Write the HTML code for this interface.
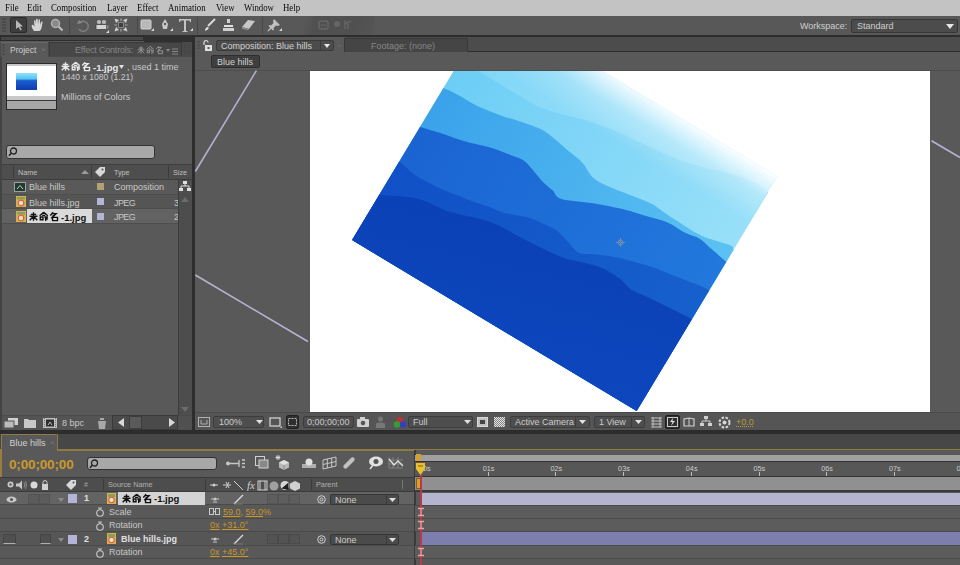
<!DOCTYPE html>
<html><head><meta charset="utf-8"><style>
*{margin:0;padding:0;box-sizing:border-box}
html,body{-webkit-font-smoothing:antialiased;width:960px;height:565px;overflow:hidden;background:#2b2b2b;font-family:"Liberation Sans",sans-serif;font-size:9px;color:#c8c8c8}
.a{position:absolute}
.t{position:absolute;white-space:nowrap;line-height:1}
.menu .t{font-family:"Liberation Serif",serif;font-size:10px;color:#0a0a0a;top:2.6px;transform:scaleX(0.88);transform-origin:0 0}
svg{position:absolute;overflow:visible}
.dd{position:absolute;background:#4b4b4b;border:1px solid #383838;border-radius:2px}
.or{color:#d39b22}
</style></head><body>
<div class="a menu" style="left:0;top:0;width:960px;height:15.5px;background:#c3c3c3">
<span class="t" style="left:5px">File</span>
<span class="t" style="left:27px">Edit</span>
<span class="t" style="left:51px">Composition</span>
<span class="t" style="left:107px">Layer</span>
<span class="t" style="left:137px">Effect</span>
<span class="t" style="left:168px">Animation</span>
<span class="t" style="left:216px">View</span>
<span class="t" style="left:244px">Window</span>
<span class="t" style="left:283px">Help</span>
</div>
<div class="a" style="left:0px;top:15.5px;width:960px;height:19.5px;background:#585858;"></div>
<div class="a" style="left:300px;top:15.5px;width:75px;height:19.5px;background:linear-gradient(110deg,#585858 0,#585858 6px,#505050 18px,#505050 55px,#565656 75px);"></div>
<div class="a" style="left:0px;top:35px;width:960px;height:6px;background:#2d2d2d;"></div>
<div class="a" style="left:1px;top:37px;width:142px;height:3px;background:#474747;"></div>
<svg style="left:2px;top:18px" width="4" height="14" viewBox="0 0 4 14"><path d="M0 1H4M0 4H4M0 7H4M0 10H4M0 13H4" stroke="#3e3e3e" stroke-width="1"/></svg>
<div class="a" style="left:10px;top:17px;width:17px;height:16px;background:#3d3d3d;border:1px solid #2c2c2c;border-radius:2px"></div>
<svg style="left:14px;top:19px" width="9" height="12" viewBox="0 0 9 12"><path d="M2 1L2 10L4.5 8L6.5 11.5L7.8 10.8L6 7.5L9 7.5Z" fill="#b8b8b8"/></svg>
<svg style="left:31px;top:18px" width="13" height="14" viewBox="0 0 13 14"><path d="M3 13C1 10 0 8 1 7C2 6 3 8 3.5 8.5L3 3C3 2 4.5 2 4.6 3L5 6.5L5 1.5C5 0.5 6.6 0.5 6.7 1.5L7 6.5L7.5 2C7.6 1 9 1 9 2L9 7L10 4C10.5 3 11.8 3.4 11.5 4.5L10.5 10C10 12 9 13 8 13Z" fill="#d4d4d4"/></svg>
<svg style="left:50px;top:18px" width="14" height="14" viewBox="0 0 14 14"><circle cx="5.5" cy="5.5" r="4" fill="#8a8a8a" stroke="#b0b0b0" stroke-width="1.5"/><path d="M8.5 8.5L12.5 12.5" stroke="#b8b8b8" stroke-width="2.2"/></svg>
<div class="a" style="left:69px;top:17px;width:1px;height:17px;background:#474747;"></div>
<svg style="left:76px;top:18px" width="14" height="14" viewBox="0 0 14 14"><path d="M4 4.5A5 5 0 1 1 3 11" fill="none" stroke="#7c7c7c" stroke-width="1.6"/><path d="M1 6L3 2L6.5 5Z" fill="#8a8a8a"/></svg>
<svg style="left:95px;top:18px" width="15" height="15" viewBox="0 0 15 15"><circle cx="4" cy="4" r="2.6" fill="#b8b8b8" stroke="#3a3a3a" stroke-width="0.6"/><circle cx="9" cy="4" r="2.6" fill="#b8b8b8" stroke="#3a3a3a" stroke-width="0.6"/><rect x="1" y="6.5" width="10.5" height="5" rx="1" fill="#d4d4d4" stroke="#333" stroke-width="0.7"/><rect x="11.5" y="7.5" width="2" height="3" fill="#8a8a8a"/><path d="M11 15L14 15L14 12Z" fill="#d8d8d8"/></svg>
<svg style="left:114px;top:18px" width="14" height="14" viewBox="0 0 14 14"><rect x="4.5" y="4.5" width="5" height="5" fill="#3e3e3e" stroke="#9a9a9a" stroke-width="0.8"/><path d="M0.5 0.5L5 2L2 5Z M13.5 0.5L9 2L12 5Z M0.5 13.5L5 12L2 9Z M13.5 13.5L9 12L12 9Z" fill="#d0d0d0"/><path d="M7 0.5V3M7 11V13.5M0.5 7H3M11 7H13.5" stroke="#a8a8a8" stroke-width="1.2"/></svg>
<div class="a" style="left:137px;top:17px;width:1px;height:17px;background:#474747;"></div>
<svg style="left:140px;top:18px" width="14" height="14" viewBox="0 0 14 14"><rect x="1" y="2" width="10" height="9" rx="1" fill="#b8b8b8" stroke="#d0d0d0" stroke-width="1"/><path d="M11 13L14 13L14 10Z" fill="#d8d8d8"/></svg>
<svg style="left:160px;top:18px" width="13" height="14" viewBox="0 0 13 14"><path d="M5 1L8 6L7 11L3 11L2 6Z" fill="#c8c8c8"/><circle cx="5" cy="6" r="1.2" fill="#555"/><path d="M10 13L13 13L13 10Z" fill="#d8d8d8"/></svg>
<svg style="left:178px;top:17px" width="15" height="16" viewBox="0 0 15 16"><path d="M1 2H13V5H12L11.5 3.5H8V14H9.5V15H4.5V14H6V3.5H2.5L2 5H1Z" fill="#c4c4c4"/><path d="M12 14L15 14L15 11Z" fill="#d8d8d8"/></svg>
<div class="a" style="left:197px;top:17px;width:1px;height:17px;background:#474747;"></div>
<svg style="left:203px;top:18px" width="13" height="14" viewBox="0 0 13 14"><path d="M12 1L5 8" stroke="#d8d8d8" stroke-width="2"/><path d="M2 13C2 11 3 9 5 9C6 10 6 11 4 12Z" fill="#e0e0e0"/></svg>
<svg style="left:222px;top:18px" width="13" height="14" viewBox="0 0 13 14"><rect x="5" y="1" width="3" height="4" fill="#d0d0d0"/><path d="M2 7H11V9H2Z" fill="#e0e0e0"/><rect x="1" y="10" width="11" height="3" fill="#d0d0d0"/></svg>
<svg style="left:241px;top:18px" width="15" height="13" viewBox="0 0 15 13"><path d="M1 9L7 2L14 3L8 11Z" fill="#c8c8c8"/><path d="M1 9L8 11L7 12L1 11Z" fill="#8a8a8a"/></svg>
<div class="a" style="left:262px;top:17px;width:1px;height:17px;background:#474747;"></div>
<svg style="left:267px;top:18px" width="15" height="14" viewBox="0 0 15 14"><path d="M7 1L13 7L11 8L9 7.5L6.5 10L7 11.5L6 12.5L1.5 8L2.5 7L4 7.5L6.5 5L6 3Z" fill="#c0c0c0"/><path d="M4 10L1 13" stroke="#c0c0c0" stroke-width="1.2"/><path d="M12 13L15 13L15 10Z" fill="#d8d8d8"/></svg>
<svg style="left:318px;top:19px" width="12" height="11" viewBox="0 0 12 11"><rect x="1" y="2" width="9" height="8" rx="2" fill="none" stroke="#676767" stroke-width="1.4"/><path d="M3 6H8" stroke="#676767"/></svg>
<svg style="left:332px;top:19px" width="10" height="11" viewBox="0 0 10 11"><circle cx="5" cy="5" r="3" fill="#666"/></svg>
<svg style="left:343px;top:19px" width="10" height="11" viewBox="0 0 10 11"><path d="M2 1V10M2 5L8 2M5 5V10" stroke="#666" stroke-width="1.4"/></svg>
<span class="t" style="left:800px;top:22px;color:#cfcfcf;font-size:9px;">Workspace:</span>
<div class="a" style="left:851px;top:19px;width:107px;height:14px;background:#4c4c4c;border:1px solid #363636;border-radius:2px"></div>
<span class="t" style="left:857px;top:22px;color:#cfcfcf;font-size:9px;">Standard</span>
<svg style="left:946px;top:24px" width="8" height="5" viewBox="0 0 8 5"><path d="M0 0H8L4 5Z" fill="#e8e8e8"/></svg>
<div class="a" style="left:0px;top:41px;width:192px;height:389px;background:#595959;"></div>
<div class="a" style="left:144px;top:35px;width:48px;height:7px;background:#303030;"></div>
<div class="a" style="left:0px;top:42px;width:192px;height:15px;background:#4a4a4a;"></div>
<div class="a" style="left:49px;top:42px;width:133px;height:14px;background:#474747;border:1px solid #3a3a3a;border-bottom:none"></div>
<div class="a" style="left:1px;top:42px;width:47px;height:15px;background:#595959;border-top:1px solid #666"></div>
<svg style="left:2px;top:44px" width="3" height="11" viewBox="0 0 3 11"><path d="M0 1H3M0 4H3M0 7H3M0 10H3" stroke="#444"/></svg>
<span class="t" style="left:10px;top:46px;color:#cccccc;font-size:8.5px;">Project</span>
<span class="t" style="left:41px;top:46px;color:#777;font-size:8px;">×</span>
<span class="t" style="left:75px;top:46px;color:#858585;font-size:9px;letter-spacing:-0.2px">Effect Controls: </span>
<svg style="left:137px;top:46px" width="29" height="9" viewBox="0 0 29 9"><path transform="translate(0.00,0) scale(0.800)" d="M2 2.6H8M0.6 4.8H9.4M5 0.3V9.8M5 4.8L0.8 9.2M5 4.8L9.2 9.2" fill="none" stroke="#9a9a9a" stroke-width="1.12"/><path transform="translate(9.20,0) scale(0.800)" d="M5 0.3L0.5 4.2M5 0.3L9.5 4.2M3.2 3.8H6.8M1.2 5.6H4.2V8.6H1.2ZM5.6 5.5H8.8V8.5M7.2 5.5V9.9" fill="none" stroke="#9a9a9a" stroke-width="1.12"/><path transform="translate(18.40,0) scale(0.800)" d="M4.2 0.3L1 3.8M3 1.8H7.5L2 7M3.5 3.8L5.5 5M3.5 6H9V9.6H3.5Z" fill="none" stroke="#9a9a9a" stroke-width="1.12"/></svg>
<svg style="left:166px;top:48px" width="14" height="7" viewBox="0 0 14 7"><path d="M0 1H4L2 4Z" fill="#8a8a8a"/><path d="M6 1H12M6 3.5H12M6 6H12" stroke="#8a8a8a"/></svg>
<svg style="left:184px;top:44px" width="7" height="11" viewBox="0 0 7 11"><path d="M1 1V10M5 1V10" stroke="#3d3d3d" stroke-dasharray="1 1"/></svg>
<div class="a" style="left:5.5px;top:62.5px;width:51.5px;height:47px;background:#2a2a2a;"></div>
<div class="a" style="left:6.5px;top:63.5px;width:49.5px;height:2.5px;background:#c8c8c8;"></div>
<div class="a" style="left:6.5px;top:66px;width:49.5px;height:30px;background:#ffffff;"></div>
<div class="a" style="left:6.5px;top:96px;width:49.5px;height:3.5px;background:#c8c8c8;"></div>
<div class="a" style="left:6.5px;top:99.5px;width:49.5px;height:1px;background:#3a3a3a;"></div>
<div class="a" style="left:6.5px;top:100.5px;width:49.5px;height:8px;background:#a6a6a6;"></div>
<div class="a" style="left:16px;top:72.5px;width:21px;height:17px;background:linear-gradient(#8ee4fc,#58c0f0 35%,#1a5ed0 45%,#0d3cae 100%)"></div>
<svg style="left:61px;top:62px" width="32" height="10" viewBox="0 0 32 10"><path transform="translate(0.00,0) scale(0.900)" d="M2 2.6H8M0.6 4.8H9.4M5 0.3V9.8M5 4.8L0.8 9.2M5 4.8L9.2 9.2" fill="none" stroke="#e8e8e8" stroke-width="1.56"/><path transform="translate(10.20,0) scale(0.900)" d="M5 0.3L0.5 4.2M5 0.3L9.5 4.2M3.2 3.8H6.8M1.2 5.6H4.2V8.6H1.2ZM5.6 5.5H8.8V8.5M7.2 5.5V9.9" fill="none" stroke="#e8e8e8" stroke-width="1.56"/><path transform="translate(20.40,0) scale(0.900)" d="M4.2 0.3L1 3.8M3 1.8H7.5L2 7M3.5 3.8L5.5 5M3.5 6H9V9.6H3.5Z" fill="none" stroke="#e8e8e8" stroke-width="1.56"/></svg>
<span class="t" style="left:93px;top:63px;color:#e8e8e8;font-size:9.5px;font-weight:bold">-1.jpg</span>
<svg style="left:119px;top:65px" width="5" height="4" viewBox="0 0 5 4"><path d="M0 0H5L2.5 4Z" fill="#e0e0e0"/></svg>
<span class="t" style="left:127px;top:63px;color:#c8c8c8;font-size:9px;">, used 1 time</span>
<span class="t" style="left:61px;top:73px;color:#c8c8c8;font-size:8.6px;">1440 x 1080 (1.21)</span>
<span class="t" style="left:61px;top:93px;color:#c8c8c8;font-size:9.1px;">Millions of Colors</span>
<div class="a" style="left:6px;top:145px;width:149px;height:14px;background:#a8a8a8;border:1px solid #333;border-radius:3px"></div>
<svg style="left:8px;top:147px" width="10" height="10" viewBox="0 0 10 10"><circle cx="5.5" cy="4" r="3" fill="none" stroke="#222" stroke-width="1.3"/><path d="M3.5 6L1 8.8" stroke="#222" stroke-width="1.6"/></svg>
<div class="a" style="left:0px;top:164px;width:192px;height:1px;background:#3f3f3f;"></div>
<div class="a" style="left:0px;top:165px;width:192px;height:14px;background:#4e4e4e;"></div>
<div class="a" style="left:0px;top:179px;width:192px;height:1px;background:#3c3c3c;"></div>
<div class="a" style="left:13px;top:166px;width:1px;height:12px;background:#3a3a3a;"></div>
<span class="t" style="left:18px;top:168.5px;color:#c0c0c0;font-size:7.2px;">Name</span>
<svg style="left:80px;top:169px" width="10" height="5" viewBox="0 0 10 5"><path d="M1 5L5 1L9 5Z" fill="#9a9a9a"/></svg>
<div class="a" style="left:91px;top:166px;width:1px;height:12px;background:#3a3a3a;"></div>
<svg style="left:94px;top:166px" width="13" height="12" viewBox="0 0 13 12"><path d="M1 6L6 1L11 1L11 6L6 11Z" fill="#d8d8d8"/><circle cx="8.5" cy="3.5" r="1" fill="#4e4e4e"/></svg>
<span class="t" style="left:114px;top:168.5px;color:#c0c0c0;font-size:7.2px;">Type</span>
<div class="a" style="left:168px;top:166px;width:1px;height:12px;background:#3a3a3a;"></div>
<span class="t" style="left:173px;top:168.5px;color:#c0c0c0;font-size:7.2px;">Size</span>
<div class="a" style="left:0px;top:180px;width:178px;height:14px;background:#595959;"></div>
<div class="a" style="left:0px;top:194px;width:178px;height:14.5px;background:#555555;"></div>
<div class="a" style="left:0px;top:208.5px;width:178px;height:14.5px;background:#626262;"></div>
<div class="a" style="left:0px;top:193.5px;width:178px;height:1px;background:#4e4e4e;"></div>
<div class="a" style="left:0px;top:208px;width:178px;height:1px;background:#4e4e4e;"></div>
<div class="a" style="left:0px;top:222.5px;width:178px;height:1px;background:#4e4e4e;"></div>
<svg style="left:14px;top:181.5px" width="12" height="10" viewBox="0 0 12 10"><rect x="0.5" y="0.5" width="11" height="9" fill="#1f3a36" stroke="#a0a0a0"/><path d="M3 7L6 3.5L9 7" stroke="#c8d880" fill="none"/></svg>
<span class="t" style="left:29px;top:183px;color:#c8c8c8;font-size:9px;">Blue hills</span>
<div class="a" style="left:97px;top:183px;width:7px;height:7px;background:#b1a274;"></div>
<span class="t" style="left:114px;top:183px;color:#c8c8c8;font-size:9px;">Composition</span>
<svg style="left:16px;top:196px" width="10" height="11" viewBox="0 0 10 11"><rect x="0" y="0" width="10" height="11" fill="#d8b448"/><circle cx="5" cy="7" r="2.8" fill="#e8e0d0" stroke="#e06040" stroke-width="1.2"/><rect x="1" y="1" width="8" height="2.5" fill="#86a060"/></svg>
<svg style="left:16px;top:210.5px" width="10" height="11" viewBox="0 0 10 11"><rect x="0" y="0" width="10" height="11" fill="#d8b448"/><circle cx="5" cy="7" r="2.8" fill="#e8e0d0" stroke="#e06040" stroke-width="1.2"/><rect x="1" y="1" width="8" height="2.5" fill="#86a060"/></svg>
<span class="t" style="left:29px;top:198.5px;color:#c8c8c8;font-size:9px;">Blue hills.jpg</span>
<div class="a" style="left:97px;top:198px;width:7px;height:7px;background:#b4b4d6;"></div>
<span class="t" style="left:114px;top:198.5px;color:#c8c8c8;font-size:9px;letter-spacing:-0.6px">JPEG</span>
<span class="t" style="left:174px;top:198.5px;color:#c8c8c8;font-size:9px;">3</span>
<div class="a" style="left:27px;top:209px;width:65px;height:14px;background:#dadada;"></div>
<svg style="left:29px;top:212px" width="32" height="10" viewBox="0 0 32 10"><path transform="translate(0.00,0) scale(0.900)" d="M2 2.6H8M0.6 4.8H9.4M5 0.3V9.8M5 4.8L0.8 9.2M5 4.8L9.2 9.2" fill="none" stroke="#101010" stroke-width="1.56"/><path transform="translate(10.20,0) scale(0.900)" d="M5 0.3L0.5 4.2M5 0.3L9.5 4.2M3.2 3.8H6.8M1.2 5.6H4.2V8.6H1.2ZM5.6 5.5H8.8V8.5M7.2 5.5V9.9" fill="none" stroke="#101010" stroke-width="1.56"/><path transform="translate(20.40,0) scale(0.900)" d="M4.2 0.3L1 3.8M3 1.8H7.5L2 7M3.5 3.8L5.5 5M3.5 6H9V9.6H3.5Z" fill="none" stroke="#101010" stroke-width="1.56"/></svg>
<span class="t" style="left:61px;top:212.5px;color:#101010;font-size:9.5px;font-weight:bold">-1.jpg</span>
<div class="a" style="left:97px;top:212.5px;width:7px;height:7px;background:#b4b4d6;"></div>
<span class="t" style="left:114px;top:213px;color:#c8c8c8;font-size:9px;letter-spacing:-0.6px">JPEG</span>
<span class="t" style="left:174px;top:213px;color:#c8c8c8;font-size:9px;">2</span>
<div class="a" style="left:178px;top:180px;width:14px;height:236px;background:#4d4d4d;border-left:1px solid #3c3c3c"></div>
<svg style="left:179px;top:181px" width="12" height="11" viewBox="0 0 12 11"><rect x="4" y="0" width="4" height="3" fill="#e0e0e0"/><path d="M6 3V5M2 5H10M2 5V7M10 5V7" stroke="#e0e0e0" fill="none"/><rect x="0" y="7" width="4" height="3" fill="#e0e0e0"/><rect x="8" y="7" width="4" height="3" fill="#e0e0e0"/></svg>
<svg style="left:181px;top:197px" width="8" height="5" viewBox="0 0 8 5"><path d="M0 5L4 0L8 5Z" fill="#6c6c6c"/></svg>
<svg style="left:181px;top:406.5px" width="8" height="5" viewBox="0 0 8 5"><path d="M0 0H8L4 5Z" fill="#6c6c6c"/></svg>
<div class="a" style="left:0px;top:415px;width:192px;height:15px;background:#545454;border-top:1px solid #4a4a4a"></div>
<svg style="left:4px;top:418px" width="14" height="10" viewBox="0 0 14 10"><rect x="4" y="0" width="10" height="7" fill="#d0d0d0"/><rect x="0" y="3" width="10" height="7" fill="#bbb" stroke="#545454"/></svg>
<svg style="left:24px;top:418px" width="12" height="10" viewBox="0 0 12 10"><path d="M0 1H4L5 2H12V10H0Z" fill="#c8c8c8"/></svg>
<svg style="left:43px;top:417px" width="14" height="12" viewBox="0 0 14 12"><rect x="0" y="1" width="14" height="10" fill="#c0c0c0"/><rect x="3" y="2.5" width="8" height="7" fill="#2e2e2e"/><path d="M5 8L7 5L9 8" stroke="#c0c0c0" fill="none"/><path d="M1.5 1V11M12.5 1V11" stroke="#777" stroke-dasharray="1 1"/></svg>
<span class="t" style="left:62px;top:419px;color:#c8c8c8;font-size:9px;">8 bpc</span>
<svg style="left:97px;top:418px" width="10" height="11" viewBox="0 0 10 11"><path d="M0 2H10M3 2V0H7V2M1 3H9L8 11H2Z" fill="#a8a8a8"/></svg>
<div class="a" style="left:112px;top:415px;width:66px;height:15px;background:#4a4a4a;border:1px solid #3a3a3a"></div>
<svg style="left:118px;top:418px" width="6" height="9" viewBox="0 0 6 9"><path d="M6 0V9L0 4.5Z" fill="#d8d8d8"/></svg>
<div class="a" style="left:129px;top:416px;width:13px;height:13px;background:#5a5a5a;border:1px solid #3c3c3c"></div>
<svg style="left:169px;top:418px" width="6" height="9" viewBox="0 0 6 9"><path d="M0 0V9L6 4.5Z" fill="#d8d8d8"/></svg>
<div class="a" style="left:178px;top:416px;width:14px;height:14px;background:#505050;"></div>
<div class="a" style="left:0px;top:57px;width:1.5px;height:373px;background:#444444;"></div>
<div class="a" style="left:192px;top:37px;width:3px;height:396px;background:#2d2d2d;"></div>
<div class="a" style="left:0px;top:430.5px;width:960px;height:3.5px;background:#2d2d2d;"></div>
<div class="a" style="left:195px;top:37px;width:765px;height:393px;background:#595959;"></div>
<div class="a" style="left:195px;top:37px;width:765px;height:15px;background:#4c4c4c;"></div>
<div class="a" style="left:345px;top:51px;width:615px;height:1px;background:#2e2e2e;"></div>
<div class="a" style="left:195px;top:37px;width:150px;height:15px;background:#595959;"></div>
<div class="a" style="left:344px;top:38px;width:124px;height:14px;background:#454545;border:1px solid #3a3a3a;border-bottom:none"></div>
<svg style="left:197px;top:41px" width="3" height="9" viewBox="0 0 3 9"><path d="M0 1H3M0 4H3M0 7H3" stroke="#454545"/></svg>
<svg style="left:202px;top:40px" width="10" height="11" viewBox="0 0 10 11"><path d="M2 5V2.5A2 2 0 0 1 6 2.5" stroke="#e0e0e0" fill="none" stroke-width="1.2"/><rect x="3" y="5" width="7" height="6" fill="#e0e0e0"/><rect x="5.5" y="7" width="2" height="2" fill="#595959"/></svg>
<div class="a" style="left:216px;top:40px;width:118px;height:11px;background:#4c4c4c;border:1px solid #3a3a3a;border-radius:2px"></div>
<span class="t" style="left:221px;top:42px;color:#d0d0d0;font-size:9px;">Composition: Blue hills</span>
<div class="a" style="left:320px;top:41px;width:1px;height:9px;background:#3a3a3a;"></div>
<svg style="left:324px;top:44px" width="6" height="4" viewBox="0 0 6 4"><path d="M0 0H6L3 4Z" fill="#e8e8e8"/></svg>
<span class="t" style="left:337px;top:42px;color:#6a6a6a;font-size:8px;">×</span>
<span class="t" style="left:371px;top:42px;color:#858585;font-size:9px;">Footage: (none)</span>
<div class="a" style="left:211px;top:55px;width:49px;height:13px;background:#3f3f3f;border:1px solid #2e2e2e;border-radius:2px"></div>
<span class="t" style="left:217px;top:58px;color:#d0d0d0;font-size:9px;">Blue hills</span>
<div class="a" style="left:195px;top:70px;width:765px;height:342px;background:#595959;"></div>
<div class="a" style="left:195px;top:70px;width:765px;height:1px;background:#4e4e4e;"></div>
<div class="a" style="left:310px;top:71px;width:620px;height:341px;background:#ffffff;"></div>
<svg style="left:195px;top:70px" width="765" height="342" viewBox="0 0 765 342"><path d="M61.4 0.6L0.3 101.5" stroke="#b0b0d0" stroke-width="1.6"/><path d="M0.3 205L112.9 271.5" stroke="#b4b4d2" stroke-width="1.6"/><path d="M736.5 70.7L765 87.5" stroke="#b4b4d2" stroke-width="1.6"/></svg>
<div class="a" style="left:310px;top:71px;width:620px;height:341px;overflow:hidden"><div class="a" style="left:88.95px;top:0.20px;width:331.5px;height:274px;transform:rotate(31deg);overflow:hidden"><svg width="331.5" height="274" viewBox="0 0 331.5 274" style="position:absolute;left:0;top:0;overflow:hidden"><defs><linearGradient id="g0" x1="0" y1="0" x2="1" y2="0"><stop offset="0" stop-color="#7ed5f7"/><stop offset="1" stop-color="#a8e6fa"/></linearGradient><linearGradient id="g1" x1="0" y1="0" x2="1" y2="0"><stop offset="0" stop-color="#6ccdf5"/><stop offset="1" stop-color="#98e0f9"/></linearGradient><linearGradient id="g2" x1="0" y1="0" x2="1" y2="0"><stop offset="0" stop-color="#3aa2ea"/><stop offset="1" stop-color="#5cc2f3"/></linearGradient><linearGradient id="g3" x1="0" y1="0" x2="1" y2="0"><stop offset="0" stop-color="#1a64d2"/><stop offset="1" stop-color="#2278dc"/></linearGradient><linearGradient id="g4" x1="0" y1="0" x2="1" y2="0"><stop offset="0" stop-color="#1150c6"/><stop offset="1" stop-color="#1660cc"/></linearGradient><linearGradient id="g5" x1="0" y1="0" x2="1" y2="1"><stop offset="0" stop-color="#0b40b4"/><stop offset="1" stop-color="#0d46be"/></linearGradient><linearGradient id="wh" x1="0" y1="0" x2="0" y2="55" gradientUnits="userSpaceOnUse"><stop offset="0" stop-color="#fff" stop-opacity="1"/><stop offset="0.12" stop-color="#fff" stop-opacity="0.8"/><stop offset="0.45" stop-color="#fff" stop-opacity="0.3"/><stop offset="1" stop-color="#fff" stop-opacity="0"/></linearGradient><linearGradient id="mh" x1="0" y1="0" x2="1" y2="0"><stop offset="0" stop-color="#fff" stop-opacity="0.2"/><stop offset="0.4" stop-color="#fff" stop-opacity="0.85"/><stop offset="1" stop-color="#fff" stop-opacity="1"/></linearGradient><mask id="mk"><rect width="331.5" height="274" fill="url(#mh)"/></mask></defs><rect width="331.5" height="274" fill="url(#g0)"/><path d="M-3.0 64.1 C9.1 64.1 52.7 64.4 69.8 64.1 C86.9 63.8 86.8 64.8 99.5 62.3 C112.2 59.7 132.6 52.2 146.1 49.1 C159.5 46.0 168.5 45.1 180.0 43.6 C191.5 42.1 203.5 41.5 215.0 40.0 C226.5 38.4 233.9 38.1 248.8 34.5 C263.8 30.9 290.5 21.0 304.7 18.3 C319.0 15.5 329.5 18.3 334.5 18.3 L334.5 277 L-3 277Z" fill="url(#g1)" /><path d="M-3.0 96.9 C0.1 96.6 8.9 95.2 15.7 94.9 C22.5 94.5 29.8 95.3 37.7 94.6 C45.6 93.9 55.8 92.0 63.3 90.5 C70.8 89.1 76.1 87.2 82.8 85.8 C89.6 84.4 97.8 82.4 103.8 81.9 C109.9 81.4 113.3 82.0 119.1 82.7 C124.9 83.3 132.0 84.9 138.5 86.0 C144.9 87.0 151.8 87.4 157.8 89.2 C163.8 90.9 168.9 95.3 174.5 96.5 C180.2 97.6 185.1 96.8 191.7 96.1 C198.3 95.4 206.7 93.7 214.2 92.5 C221.8 91.2 230.6 89.3 236.9 88.8 C243.2 88.3 247.0 89.3 252.1 89.5 C257.2 89.8 260.1 90.1 267.5 90.2 C274.9 90.4 286.9 91.4 296.7 90.4 C306.5 89.3 320.6 84.6 326.3 83.8 C332.0 83.0 329.8 85.3 331.2 85.5 C332.5 85.8 333.9 85.5 334.5 85.5 L334.5 277 L-3 277Z" fill="url(#g2)" /><path d="M-3.0 141.6 C-2.3 141.6 -3.1 142.6 1.1 141.6 C5.4 140.7 15.4 137.8 22.7 136.2 C29.9 134.5 36.8 133.6 44.7 131.6 C52.5 129.6 61.9 126.0 69.8 123.9 C77.7 121.9 86.0 120.5 91.9 119.4 C97.9 118.3 101.3 117.2 105.6 117.4 C109.8 117.6 112.7 118.9 117.2 120.3 C121.8 121.7 128.1 124.4 132.9 125.7 C137.8 127.0 142.3 127.3 146.5 128.2 C150.6 129.1 151.2 132.7 158.1 131.1 C165.0 129.4 177.6 122.3 187.7 118.3 C197.7 114.4 209.6 110.1 218.3 107.4 C227.0 104.7 232.6 103.7 239.7 101.9 C246.9 100.0 254.4 97.3 261.3 96.4 C268.2 95.5 275.0 96.7 281.1 96.3 C287.1 95.9 292.4 93.7 297.6 93.8 C302.9 93.9 307.2 95.6 312.8 96.6 C318.3 97.6 327.6 99.2 331.2 99.8 C334.8 100.3 334.0 99.8 334.5 99.8 L334.5 277 L-3 277Z" fill="url(#g3)" /><path d="M-3.0 182.9 C-1.9 182.9 -0.4 182.4 3.4 182.9 C7.2 183.4 15.1 185.4 20.0 185.8 C24.9 186.3 27.8 185.8 32.9 185.6 C38.0 185.3 44.9 184.9 50.6 184.2 C56.4 183.6 61.9 182.5 67.6 181.5 C73.2 180.6 78.8 179.7 84.5 178.6 C90.1 177.5 96.1 175.9 101.4 174.9 C106.6 173.8 109.8 174.2 116.1 172.4 C122.4 170.7 132.4 166.1 139.1 164.2 C145.7 162.4 150.8 162.2 156.0 161.5 C161.2 160.9 165.3 160.0 170.3 160.4 C175.2 160.9 180.4 162.9 185.5 164.2 C190.6 165.5 196.1 168.4 200.9 168.1 C205.6 167.7 208.5 164.5 213.9 162.1 C219.4 159.6 226.8 155.9 233.6 153.4 C240.3 150.9 247.4 149.0 254.5 147.0 C261.6 145.1 268.7 143.1 276.0 141.5 C283.4 140.0 291.0 139.2 298.6 137.9 C306.2 136.6 315.8 134.8 321.7 133.9 C327.7 133.1 332.4 133.0 334.5 132.8 L334.5 277 L-3 277Z" fill="url(#g4)" /><path d="M-3.0 220.8 C-2.4 220.8 -5.7 223.5 0.6 220.8 C7.0 218.1 23.7 208.3 35.1 204.8 C46.5 201.2 56.8 202.4 69.1 199.5 C81.4 196.6 95.7 189.8 108.8 187.3 C122.0 184.8 134.9 185.8 148.1 184.7 C161.3 183.6 177.8 182.5 188.0 180.8 C198.1 179.1 201.9 176.4 209.0 174.4 C216.1 172.4 223.5 169.8 230.4 168.9 C237.4 168.1 244.7 168.6 250.5 169.3 C256.3 169.9 259.2 172.7 265.1 172.8 C271.0 173.0 278.5 171.0 285.9 170.3 C293.3 169.6 302.4 169.0 309.5 168.5 C316.6 167.9 324.3 167.2 328.4 167.0 C332.6 166.8 333.5 167.0 334.5 167.0 L334.5 277 L-3 277Z" fill="url(#g5)" /><rect width="331.5" height="274" fill="url(#wh)" mask="url(#mk)"/></svg></div><svg style="left:306px;top:167px" width="9" height="9"><circle cx="4.5" cy="4.5" r="2.5" fill="none" stroke="#8090a8" stroke-width="1"/><path d="M4.5 0V9M0 4.5H9" stroke="#8090a8" stroke-width="0.8"/></svg></div>
<div class="a" style="left:195px;top:412px;width:765px;height:18px;background:#555555;border-top:1px solid #4a4a4a"></div>
<svg style="left:198px;top:417px" width="12" height="10" viewBox="0 0 12 10"><rect x="0.5" y="0.5" width="11" height="9" fill="none" stroke="#b0b0b0"/><path d="M3 3V7M9 3V7M3 7H9" stroke="#b0b0b0"/></svg>
<div class="a" style="left:213px;top:416px;width:51px;height:12px;background:#4e4e4e;border:1px solid #3c3c3c;border-radius:2px"></div>
<span class="t" style="left:219px;top:418px;color:#cccccc;font-size:9px;">100%</span>
<svg style="left:256px;top:420px" width="7" height="4" viewBox="0 0 7 4"><path d="M0 0H7L3.5 4Z" fill="#e0e0e0"/></svg>
<svg style="left:269px;top:416px" width="13" height="12" viewBox="0 0 13 12"><rect x="1" y="2" width="10" height="8" fill="none" stroke="#d0d0d0" stroke-width="1.3"/><path d="M11 12H13V10Z" fill="#d0d0d0"/></svg>
<div class="a" style="left:286px;top:415px;width:13px;height:14px;background:#2f2f2f;border:1px solid #222;border-radius:2px"></div>
<svg style="left:288px;top:417px" width="9" height="10" viewBox="0 0 9 10"><rect x="0.5" y="1.5" width="8" height="7" fill="none" stroke="#b8b8b8" stroke-dasharray="2 1"/></svg>
<div class="a" style="left:303px;top:416px;width:51px;height:12px;background:#4e4e4e;border:1px solid #3c3c3c;border-radius:2px"></div>
<span class="t" style="left:307px;top:418px;color:#c8c8c8;font-size:9px;">0;00;00;00</span>
<svg style="left:357px;top:417px" width="12" height="10" viewBox="0 0 12 10"><rect x="0" y="2" width="12" height="8" rx="1" fill="#d0d0d0"/><rect x="3" y="0" width="5" height="3" fill="#d0d0d0"/><circle cx="6" cy="6" r="2.3" fill="#555"/></svg>
<svg style="left:376px;top:416px" width="9" height="12" viewBox="0 0 9 12"><circle cx="4.5" cy="3" r="2.5" fill="#777"/><path d="M0 12V8C0 6 9 6 9 8V12Z" fill="#777"/></svg>
<svg style="left:393px;top:416px" width="14" height="13" viewBox="0 0 14 13"><circle cx="7" cy="4" r="3.2" fill="#c03030"/><circle cx="4" cy="8.5" r="3.2" fill="#30a030"/><circle cx="10" cy="8.5" r="3.2" fill="#3040c0"/></svg>
<div class="a" style="left:408px;top:416px;width:65px;height:12px;background:#4e4e4e;border:1px solid #3c3c3c;border-radius:2px"></div>
<span class="t" style="left:413px;top:418px;color:#cccccc;font-size:9px;">Full</span>
<svg style="left:464px;top:420px" width="7" height="4" viewBox="0 0 7 4"><path d="M0 0H7L3.5 4Z" fill="#e0e0e0"/></svg>
<svg style="left:477px;top:417px" width="11" height="10" viewBox="0 0 11 10"><rect x="0.5" y="0.5" width="10" height="9" fill="#c0c0c0" stroke="#d8d8d8"/><rect x="3" y="3" width="5" height="4" fill="#444"/></svg>
<svg style="left:494px;top:417px" width="11" height="10" viewBox="0 0 11 10"><defs><pattern id="ck" width="2" height="2" patternUnits="userSpaceOnUse"><rect width="1" height="1" fill="#e0e0e0"/><rect x="1" y="1" width="1" height="1" fill="#e0e0e0"/><rect x="1" width="1" height="1" fill="#888"/><rect y="1" width="1" height="1" fill="#888"/></pattern></defs><rect width="11" height="10" fill="url(#ck)"/></svg>
<div class="a" style="left:510px;top:416px;width:80px;height:12px;background:#4e4e4e;border:1px solid #3c3c3c;border-radius:2px"></div>
<span class="t" style="left:515px;top:418px;color:#cccccc;font-size:9px;">Active Camera</span>
<div class="a" style="left:575px;top:417px;width:1px;height:10px;background:#3c3c3c;"></div>
<svg style="left:579px;top:420px" width="7" height="4" viewBox="0 0 7 4"><path d="M0 0H7L3.5 4Z" fill="#e0e0e0"/></svg>
<div class="a" style="left:594px;top:416px;width:51px;height:12px;background:#4e4e4e;border:1px solid #3c3c3c;border-radius:2px"></div>
<span class="t" style="left:599px;top:418px;color:#cccccc;font-size:9px;">1 View</span>
<div class="a" style="left:631px;top:417px;width:1px;height:10px;background:#3c3c3c;"></div>
<svg style="left:635px;top:420px" width="7" height="4" viewBox="0 0 7 4"><path d="M0 0H7L3.5 4Z" fill="#e0e0e0"/></svg>
<svg style="left:651px;top:417px" width="11" height="10" viewBox="0 0 11 10"><path d="M0 1H11M0 4H11M0 7H11M0 10H11" stroke="#c0c0c0"/><path d="M2 0V10M9 0V10" stroke="#c0c0c0"/></svg>
<div class="a" style="left:665px;top:415px;width:15px;height:14px;background:#2f2f2f;border:1px solid #1e1e1e;border-radius:2px"></div>
<svg style="left:667px;top:417px" width="11" height="10" viewBox="0 0 11 10"><rect x="0.5" y="0.5" width="10" height="9" fill="none" stroke="#c8c8c8"/><path d="M6 1L3 5H5.5L4 9L8 4H5.5Z" fill="#e0e0e0"/></svg>
<svg style="left:683px;top:417px" width="12" height="10" viewBox="0 0 12 10"><path d="M1 9V2L6 1L11 2V9Z" fill="none" stroke="#d0d0d0" stroke-width="1.2"/><path d="M6 1V9" stroke="#d0d0d0"/></svg>
<svg style="left:700px;top:416px" width="12" height="12" viewBox="0 0 12 12"><rect x="4" y="0" width="4" height="3" fill="#d0d0d0"/><path d="M6 3V5M2 5H10M2 5V7M10 5V7" stroke="#d0d0d0" fill="none"/><rect x="0" y="7" width="4" height="3" fill="#d0d0d0"/><rect x="8" y="7" width="4" height="3" fill="#d0d0d0"/></svg>
<svg style="left:718px;top:416px" width="13" height="13" viewBox="0 0 13 13"><circle cx="6.5" cy="6.5" r="5" fill="none" stroke="#d8d8d8" stroke-width="2" stroke-dasharray="2.5 1.5"/><circle cx="6.5" cy="6.5" r="2" fill="#d8d8d8"/></svg>
<span class="t" style="left:736px;top:418px;color:#b89a38;font-size:9px;text-decoration:underline dotted">+0.0</span>
<div class="a" style="left:0px;top:434px;width:960px;height:131px;background:#595959;"></div>
<div class="a" style="left:0px;top:434px;width:960px;height:15px;background:#474747;"></div>
<div class="a" style="left:0.5px;top:434px;width:57px;height:16px;background:#595959;border:1px solid #8c7a48;border-bottom:none;border-top-right-radius:2px"></div>
<svg style="left:3px;top:437px" width="3" height="10" viewBox="0 0 3 10"><path d="M0 1H3M0 4H3M0 7H3" stroke="#555"/></svg>
<span class="t" style="left:9.5px;top:438.5px;color:#d0d0d0;font-size:9px;">Blue hills</span>
<span class="t" style="left:50px;top:438.5px;color:#777;font-size:8px;">×</span>
<div class="a" style="left:57px;top:448.5px;width:903px;height:2px;background:#8f7a40;"></div>
<div class="a" style="left:2px;top:448.5px;width:55px;height:2px;background:#595959;"></div>
<div class="a" style="left:0px;top:449px;width:2px;height:116px;background:#9c7c3c;"></div>
<span class="t" style="left:9px;top:457.5px;color:#c99a2c;font-size:13.5px;font-weight:bold;letter-spacing:-0.15px">0;00;00;00</span>
<div class="a" style="left:87px;top:457px;width:130px;height:13px;background:#a8a8a8;border:1px solid #333;border-radius:3px"></div>
<svg style="left:89px;top:459px" width="10" height="10" viewBox="0 0 10 10"><circle cx="5.5" cy="4" r="3" fill="none" stroke="#222" stroke-width="1.3"/><path d="M3.5 6L1 8.8" stroke="#222" stroke-width="1.6"/></svg>
<svg style="left:225px;top:458px" width="21" height="11" viewBox="0 0 21 11"><circle cx="3" cy="5.5" r="2" fill="#c8c8c8"/><path d="M5 5.5H14M14 2V9M17 2H20M17 5.5H20M17 9H20" stroke="#c8c8c8" stroke-width="1.3"/></svg>
<svg style="left:255px;top:456px" width="14" height="13" viewBox="0 0 14 13"><rect x="0.5" y="0.5" width="9" height="9" fill="none" stroke="#d0d0d0"/><rect x="4" y="4" width="9" height="8" fill="#888" stroke="#d0d0d0"/></svg>
<svg style="left:275px;top:455px" width="16" height="15" viewBox="0 0 16 15"><path d="M9 5L14 7.5V12.5L9 15L4 12.5V7.5Z" fill="#b8b8b8"/><path d="M9 5L14 7.5L9 10L4 7.5Z" fill="#e0e0e0"/><path d="M9 10V15" stroke="#888"/><path d="M3 0V5M0.5 2.5H5.5M1 0.8L5 4.2M5 0.8L1 4.2" stroke="#e8e8e8" stroke-width="0.8"/></svg>
<svg style="left:301px;top:456px" width="16" height="13" viewBox="0 0 16 13"><path d="M1 12V8H15V12Z" fill="#b0b0b0"/><circle cx="8" cy="6" r="3.5" fill="#e0e0e0"/></svg>
<svg style="left:322px;top:456px" width="15" height="13" viewBox="0 0 15 13"><path d="M1 4L14 1V10L1 13Z" fill="none" stroke="#c8c8c8"/><path d="M5.3 3V12M9.7 2V11M1 8.5L14 5.5" stroke="#c8c8c8"/></svg>
<svg style="left:342px;top:456px" width="15" height="13" viewBox="0 0 15 13"><path d="M2 9L9 2C11 0 14 3 12 5L5 12C3 14 0 11 2 9Z" fill="#c0c0c0"/></svg>
<svg style="left:367px;top:455px" width="17" height="15" viewBox="0 0 17 15"><ellipse cx="9" cy="6.5" rx="7" ry="5" fill="#e0e0e0"/><circle cx="9" cy="6.5" r="2.5" fill="#555"/><path d="M3 14L6 10" stroke="#e0e0e0" stroke-width="1.5"/></svg>
<svg style="left:388px;top:456px" width="16" height="13" viewBox="0 0 16 13"><path d="M1 1V12H15M1 4H15M1 8H15M5 1V12M10 1V12" stroke="#8a8a8a" fill="none" stroke-width="0.8"/><path d="M1 3L6 9L10 5L15 10" stroke="#e0e0e0" fill="none" stroke-width="1.3"/></svg>
<div class="a" style="left:0px;top:477px;width:415px;height:15px;background:#4d4d4d;border-top:1px solid #3a3a3a;border-bottom:1px solid #3a3a3a"></div>
<svg style="left:7px;top:481px" width="7" height="7" viewBox="0 0 7 7"><circle cx="3.5" cy="3.5" r="3" fill="#c8c8c8"/><circle cx="3.5" cy="3.5" r="1.2" fill="#5a5a5a"/></svg>
<svg style="left:16px;top:480px" width="11" height="10" viewBox="0 0 11 10"><path d="M0 3.5H3L6 0.5V9.5L3 6.5H0Z" fill="#c8c8c8"/><path d="M8 2.5Q9.5 5 8 7.5M9.5 1Q11.5 5 9.5 9" stroke="#a0a0a0" fill="none" stroke-width="0.8"/></svg>
<svg style="left:30px;top:481px" width="8" height="8" viewBox="0 0 8 8"><circle cx="4" cy="4" r="3.5" fill="#d8d8d8"/></svg>
<svg style="left:41px;top:480px" width="8" height="10" viewBox="0 0 8 10"><path d="M2 4V2.5A2 2 0 0 1 6 2.5V4" stroke="#d0d0d0" fill="none"/><rect x="1" y="4" width="6" height="6" fill="#d0d0d0"/></svg>
<svg style="left:65px;top:479px" width="12" height="11" viewBox="0 0 12 11"><path d="M1 6L6 1L11 1L11 6L6 11Z" fill="#d8d8d8"/><circle cx="8.5" cy="3.5" r="1" fill="#4d4d4d"/></svg>
<span class="t" style="left:84px;top:481px;color:#a0a0a0;font-size:7px;">#</span>
<div class="a" style="left:103px;top:479px;width:1px;height:11px;background:#3a3a3a;"></div>
<span class="t" style="left:108px;top:481px;color:#b0b0b0;font-size:7.3px;">Source Name</span>
<div class="a" style="left:205px;top:479px;width:1px;height:11px;background:#3a3a3a;"></div>
<svg style="left:209px;top:480px" width="92" height="11" viewBox="0 0 92 11"><path d="M1 5H9" stroke="#d0d0d0"/><circle cx="5" cy="5" r="1.5" fill="#d0d0d0"/><path d="M17 2L20 8M14 5H22M17 8L20 2" stroke="#d0d0d0"/><path d="M25 1L34 10" stroke="#d0d0d0"/><text x="38" y="9" font-family="Liberation Serif" font-style="italic" font-size="11" fill="#d0d0d0">fx</text><rect x="49" y="1" width="9" height="9" fill="none" stroke="#d0d0d0"/><path d="M51 1V10M56 1V10" stroke="#d0d0d0"/><circle cx="65" cy="6" r="4.5" fill="#a0a0a0"/><circle cx="76" cy="5.5" r="4.5" fill="#d8d8d8"/><path d="M72.5 8.5L79.5 2.5V10Z" fill="#202020"/><path d="M86 1L91 3.5V8.5L86 11L81 8.5V3.5Z" fill="#d0d0d0"/></svg>
<div class="a" style="left:311px;top:479px;width:1px;height:11px;background:#3a3a3a;"></div>
<span class="t" style="left:316px;top:481px;color:#b0b0b0;font-size:7.3px;">Parent</span>
<div class="a" style="left:402px;top:480px;width:1px;height:9px;background:#777;"></div>
<div class="a" style="left:0px;top:492px;width:415px;height:13px;background:#636363;"></div>
<div class="a" style="left:0px;top:504px;width:415px;height:1px;background:#4a4a4a;"></div>
<div class="a" style="left:0px;top:505px;width:415px;height:14px;background:#595959;"></div>
<div class="a" style="left:0px;top:518px;width:415px;height:1px;background:#4a4a4a;"></div>
<div class="a" style="left:0px;top:519px;width:415px;height:13px;background:#595959;"></div>
<div class="a" style="left:0px;top:531px;width:415px;height:1px;background:#4a4a4a;"></div>
<div class="a" style="left:0px;top:532px;width:415px;height:14px;background:#565656;"></div>
<div class="a" style="left:0px;top:545px;width:415px;height:1px;background:#4a4a4a;"></div>
<div class="a" style="left:0px;top:546px;width:415px;height:13px;background:#595959;"></div>
<div class="a" style="left:0px;top:558px;width:415px;height:1px;background:#4a4a4a;"></div>
<div class="a" style="left:0px;top:559px;width:415px;height:6px;background:#595959;"></div>
<svg style="left:6px;top:496px" width="11" height="7" viewBox="0 0 11 7"><ellipse cx="5.5" cy="3.5" rx="5" ry="3" fill="#c8c8c8"/><circle cx="5.5" cy="3.5" r="1.5" fill="#555"/></svg>
<div class="a" style="left:28px;top:494px;width:11px;height:10px;background:#5c5c5c;border:1px solid #555"></div>
<div class="a" style="left:39px;top:494px;width:11px;height:10px;background:#5c5c5c;border:1px solid #555"></div>
<svg style="left:58px;top:497.5px" width="6" height="4" viewBox="0 0 6 4"><path d="M0 0H6L3 4Z" fill="#8c8c8c"/></svg>
<div class="a" style="left:68px;top:494px;width:9px;height:9px;background:#b4b4d6;"></div>
<span class="t" style="left:84px;top:494px;color:#e0e0e0;font-size:9px;font-weight:bold">1</span>
<svg style="left:107px;top:493px" width="9" height="11" viewBox="0 0 9 11"><rect x="0" y="0" width="9" height="11" fill="#d8b448"/><circle cx="4.5" cy="7" r="2.7" fill="#e8e0d0" stroke="#e06040" stroke-width="1.1"/><rect x="1" y="1" width="7" height="3" fill="#86a060"/></svg>
<div class="a" style="left:118px;top:492px;width:87px;height:13px;background:#d4d4d4;"></div>
<svg style="left:122px;top:494px" width="32" height="10" viewBox="0 0 32 10"><path transform="translate(0.00,0) scale(0.900)" d="M2 2.6H8M0.6 4.8H9.4M5 0.3V9.8M5 4.8L0.8 9.2M5 4.8L9.2 9.2" fill="none" stroke="#101010" stroke-width="1.56"/><path transform="translate(10.20,0) scale(0.900)" d="M5 0.3L0.5 4.2M5 0.3L9.5 4.2M3.2 3.8H6.8M1.2 5.6H4.2V8.6H1.2ZM5.6 5.5H8.8V8.5M7.2 5.5V9.9" fill="none" stroke="#101010" stroke-width="1.56"/><path transform="translate(20.40,0) scale(0.900)" d="M4.2 0.3L1 3.8M3 1.8H7.5L2 7M3.5 3.8L5.5 5M3.5 6H9V9.6H3.5Z" fill="none" stroke="#101010" stroke-width="1.56"/></svg>
<span class="t" style="left:154px;top:494px;color:#101010;font-size:9.5px;font-weight:bold">-1.jpg</span>
<svg style="left:210px;top:496px" width="10" height="7" viewBox="0 0 10 7"><path d="M1 3H9" stroke="#c8c8c8"/><circle cx="5" cy="3" r="1.5" fill="#c8c8c8"/><path d="M3 6H7" stroke="#c8c8c8"/></svg>
<svg style="left:233px;top:494px" width="11" height="10" viewBox="0 0 11 10"><path d="M1 10L10 1" stroke="#e0e0e0" stroke-width="1.3"/><path d="M1 10H10" stroke="#777"/></svg>
<div class="a" style="left:267px;top:494px;width:11px;height:10px;background:#5e5e5e;border:1px solid #555"></div>
<div class="a" style="left:278px;top:494px;width:11px;height:10px;background:#5e5e5e;border:1px solid #555"></div>
<div class="a" style="left:289px;top:494px;width:11px;height:10px;background:#5e5e5e;border:1px solid #555"></div>
<svg style="left:317px;top:495px" width="9" height="9" viewBox="0 0 9 9"><circle cx="4.5" cy="4.5" r="3.8" fill="none" stroke="#d0d0d0"/><circle cx="4.5" cy="4.5" r="1.5" fill="none" stroke="#d0d0d0"/></svg>
<div class="a" style="left:330px;top:494px;width:69px;height:11px;background:#4b4b4b;border:1px solid #353535;border-radius:2px"></div>
<span class="t" style="left:335px;top:496px;color:#cccccc;font-size:9px;">None</span>
<div class="a" style="left:386px;top:495px;width:1px;height:9px;background:#3a3a3a;"></div>
<svg style="left:389px;top:498px" width="7" height="4" viewBox="0 0 7 4"><path d="M0 0H7L3.5 4Z" fill="#e0e0e0"/></svg>
<svg style="left:96px;top:508px" width="8" height="9" viewBox="0 0 8 9"><circle cx="4" cy="5" r="3.3" fill="none" stroke="#c8c8c8" stroke-width="1.1"/><path d="M2 0H6M4 0V2" stroke="#c8c8c8"/></svg>
<span class="t" style="left:109px;top:508px;color:#c8c8c8;font-size:9px;">Scale</span>
<svg style="left:209px;top:508px" width="11" height="7" viewBox="0 0 11 7"><rect x="0.5" y="0.5" width="4" height="6" fill="none" stroke="#c8c8c8"/><rect x="6.5" y="0.5" width="4" height="6" fill="none" stroke="#c8c8c8"/><path d="M4 3.5H7" stroke="#c8c8c8"/></svg>
<span class="t" style="left:223px;top:508px;color:#c99628;font-size:9px;"><u>59.0</u>, <u>59.0</u>%</span>
<svg style="left:96px;top:522px" width="8" height="9" viewBox="0 0 8 9"><circle cx="4" cy="5" r="3.3" fill="none" stroke="#c8c8c8" stroke-width="1.1"/><path d="M2 0H6M4 0V2" stroke="#c8c8c8"/></svg>
<span class="t" style="left:109px;top:521px;color:#c8c8c8;font-size:9px;">Rotation</span>
<span class="t" style="left:210px;top:521px;color:#c99628;font-size:9px;"><u>0x</u> <u>+31.0°</u></span>
<div class="a" style="left:3px;top:534px;width:13px;height:10px;background:#505050;border:1px solid #444;border-bottom:1px solid #b0b0b0"></div>
<div class="a" style="left:40px;top:534px;width:11px;height:10px;background:#505050;border:1px solid #444;border-bottom:1px solid #b0b0b0"></div>
<svg style="left:58px;top:537.5px" width="6" height="4" viewBox="0 0 6 4"><path d="M0 0H6L3 4Z" fill="#8c8c8c"/></svg>
<div class="a" style="left:68px;top:535px;width:9px;height:9px;background:#b4b4d6;"></div>
<span class="t" style="left:84px;top:535px;color:#e0e0e0;font-size:9px;font-weight:bold">2</span>
<svg style="left:107px;top:533px" width="9" height="11" viewBox="0 0 9 11"><rect x="0" y="0" width="9" height="11" fill="#d8b448"/><circle cx="4.5" cy="7" r="2.7" fill="#e8e0d0" stroke="#e06040" stroke-width="1.1"/><rect x="1" y="1" width="7" height="3" fill="#86a060"/></svg>
<span class="t" style="left:121px;top:535px;color:#e0e0e0;font-size:9px;font-weight:bold">Blue hills.jpg</span>
<svg style="left:210px;top:536px" width="10" height="7" viewBox="0 0 10 7"><path d="M1 3H9" stroke="#c8c8c8"/><circle cx="5" cy="3" r="1.5" fill="#c8c8c8"/><path d="M3 6H7" stroke="#c8c8c8"/></svg>
<svg style="left:233px;top:534px" width="11" height="10" viewBox="0 0 11 10"><path d="M1 10L10 1" stroke="#e0e0e0" stroke-width="1.3"/><path d="M1 10H10" stroke="#777"/></svg>
<div class="a" style="left:267px;top:534px;width:11px;height:10px;background:#535353;border:1px solid #4a4a4a"></div>
<div class="a" style="left:278px;top:534px;width:11px;height:10px;background:#535353;border:1px solid #4a4a4a"></div>
<div class="a" style="left:289px;top:534px;width:11px;height:10px;background:#535353;border:1px solid #4a4a4a"></div>
<svg style="left:317px;top:535px" width="9" height="9" viewBox="0 0 9 9"><circle cx="4.5" cy="4.5" r="3.8" fill="none" stroke="#d0d0d0"/><circle cx="4.5" cy="4.5" r="1.5" fill="none" stroke="#d0d0d0"/></svg>
<div class="a" style="left:330px;top:534px;width:69px;height:11px;background:#4b4b4b;border:1px solid #353535;border-radius:2px"></div>
<span class="t" style="left:335px;top:536px;color:#cccccc;font-size:9px;">None</span>
<div class="a" style="left:386px;top:535px;width:1px;height:9px;background:#3a3a3a;"></div>
<svg style="left:389px;top:538px" width="7" height="4" viewBox="0 0 7 4"><path d="M0 0H7L3.5 4Z" fill="#e0e0e0"/></svg>
<svg style="left:96px;top:549px" width="8" height="9" viewBox="0 0 8 9"><circle cx="4" cy="5" r="3.3" fill="none" stroke="#c8c8c8" stroke-width="1.1"/><path d="M2 0H6M4 0V2" stroke="#c8c8c8"/></svg>
<span class="t" style="left:109px;top:548px;color:#c8c8c8;font-size:9px;">Rotation</span>
<span class="t" style="left:210px;top:548px;color:#c99628;font-size:9px;"><u>0x</u> <u>+45.0°</u></span>
<div class="a" style="left:414px;top:450px;width:546px;height:115px;background:#595959;"></div>
<div class="a" style="left:414px;top:450px;width:2px;height:115px;background:#3a3a3a;"></div>
<div class="a" style="left:415px;top:454.5px;width:545px;height:6.5px;background:#a0a0a0;"></div>
<div class="a" style="left:415px;top:461px;width:545px;height:1px;background:#333;"></div>
<div class="a" style="left:416px;top:454px;width:5px;height:7px;background:#d6a030;"></div>
<div class="a" style="left:415px;top:462px;width:545px;height:14px;background:#575757;"></div>
<div class="a" style="left:420px;top:472px;width:1px;height:4px;background:#c0c0c0;"></div>
<span class="t" style="left:482.7px;top:464.5px;color:#cccccc;font-size:7.3px;">01s</span>
<div class="a" style="left:488px;top:472px;width:1px;height:4px;background:#c0c0c0;"></div>
<span class="t" style="left:550.4px;top:464.5px;color:#cccccc;font-size:7.3px;">02s</span>
<div class="a" style="left:555px;top:472px;width:1px;height:4px;background:#c0c0c0;"></div>
<span class="t" style="left:618.1px;top:464.5px;color:#cccccc;font-size:7.3px;">03s</span>
<div class="a" style="left:623px;top:472px;width:1px;height:4px;background:#c0c0c0;"></div>
<span class="t" style="left:685.8px;top:464.5px;color:#cccccc;font-size:7.3px;">04s</span>
<div class="a" style="left:691px;top:472px;width:1px;height:4px;background:#c0c0c0;"></div>
<span class="t" style="left:753.5px;top:464.5px;color:#cccccc;font-size:7.3px;">05s</span>
<div class="a" style="left:759px;top:472px;width:1px;height:4px;background:#c0c0c0;"></div>
<span class="t" style="left:821.2px;top:464.5px;color:#cccccc;font-size:7.3px;">06s</span>
<div class="a" style="left:826px;top:472px;width:1px;height:4px;background:#c0c0c0;"></div>
<span class="t" style="left:888.9000000000001px;top:464.5px;color:#cccccc;font-size:7.3px;">07s</span>
<div class="a" style="left:894px;top:472px;width:1px;height:4px;background:#c0c0c0;"></div>
<span class="t" style="left:956.6px;top:464.5px;color:#cccccc;font-size:7.3px;">08s</span>
<div class="a" style="left:962px;top:472px;width:1px;height:4px;background:#c0c0c0;"></div>
<span class="t" style="left:423px;top:464.5px;color:#cccccc;font-size:7.3px;">0s</span>
<div class="a" style="left:415px;top:476px;width:545px;height:1px;background:#333;"></div>
<div class="a" style="left:415px;top:477px;width:545px;height:12.5px;background:#909090;"></div>
<div class="a" style="left:416px;top:478px;width:5px;height:11px;background:#d6a030;border:1px solid #8a6010"></div>
<div class="a" style="left:415px;top:490px;width:545px;height:2px;background:#3a3a3a;"></div>
<div class="a" style="left:421px;top:492.5px;width:539px;height:12px;background:#b4b4ce;"></div>
<div class="a" style="left:415px;top:505px;width:545px;height:1px;background:#484848;"></div>
<div class="a" style="left:415px;top:506px;width:545px;height:13px;background:#5c5c5c;"></div>
<div class="a" style="left:415px;top:518px;width:545px;height:1px;background:#4a4a4a;"></div>
<div class="a" style="left:415px;top:519px;width:545px;height:13px;background:#5c5c5c;"></div>
<div class="a" style="left:415px;top:531px;width:545px;height:1px;background:#4a4a4a;"></div>
<div class="a" style="left:421px;top:532px;width:539px;height:13px;background:#7e7eae;"></div>
<div class="a" style="left:415px;top:545px;width:545px;height:1px;background:#4a4a4a;"></div>
<div class="a" style="left:415px;top:546px;width:545px;height:13px;background:#5c5c5c;"></div>
<div class="a" style="left:415px;top:558px;width:545px;height:1px;background:#4a4a4a;"></div>
<div class="a" style="left:419.5px;top:462px;width:2px;height:103px;background:#b83a4a;"></div>
<svg style="left:416px;top:463px" width="9" height="12" viewBox="0 0 9 12"><path d="M0 0H9V6L4.5 12L0 6Z" fill="#e8c030"/><path d="M2 3L7 3" stroke="#806010"/></svg>
<svg style="left:418px;top:508px" width="6" height="8" viewBox="0 0 6 8"><path d="M0 0.5H6M0 7.5H6M3 0.5V7.5" stroke="#f0a0a0" stroke-width="1.3"/></svg>
<svg style="left:418px;top:521px" width="6" height="8" viewBox="0 0 6 8"><path d="M0 0.5H6M0 7.5H6M3 0.5V7.5" stroke="#f0a0a0" stroke-width="1.3"/></svg>
<svg style="left:418px;top:548px" width="6" height="8" viewBox="0 0 6 8"><path d="M0 0.5H6M0 7.5H6M3 0.5V7.5" stroke="#f0a0a0" stroke-width="1.3"/></svg>
</body></html>
